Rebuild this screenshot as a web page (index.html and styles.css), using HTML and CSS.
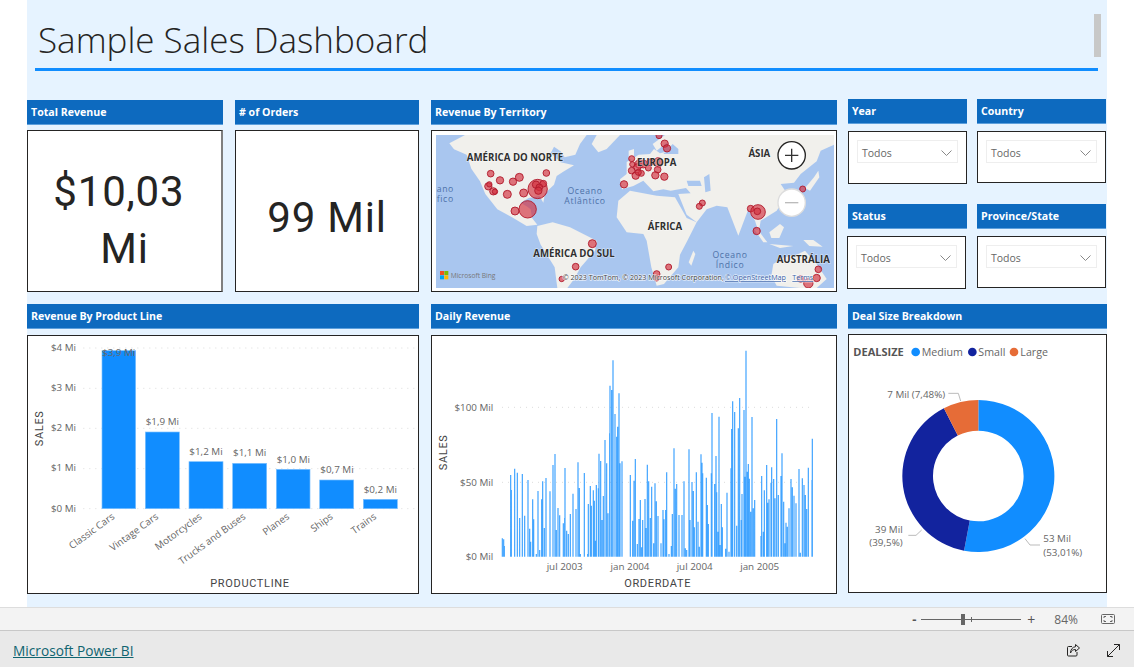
FILE: index.html
```html
<!DOCTYPE html>
<html lang="pt">
<head>
<meta charset="utf-8">
<title>Sample Sales Dashboard</title>
<link rel="stylesheet" href="styles.css">
</head>
<body>
<div class="app">
  <div class="stage">
    <main class="canvas">
      <header class="title-block">
        <h1 class="title">Sample Sales Dashboard</h1>
        <div class="title-scroll"></div>
      </header>
      <div class="dash">
        <section class="visual">
          <h2 class="vh">Total Revenue</h2>
          <div class="box kpi kpi-two kpi-right-shadow"><span class="kpi-value">$10,03&nbsp;<br>Mi</span></div>
        </section>
        <section class="visual">
          <h2 class="vh"># of Orders</h2>
          <div class="box kpi"><span class="kpi-value">99 Mil</span></div>
        </section>
        <section class="visual">
          <h2 class="vh">Revenue By Territory</h2>
          <div class="box map-box">
            <svg class="map" viewBox="18 123 1194 459" width="398" height="153" role="img" aria-label="Mapa">
              <defs><filter id="soft" x="-5%" y="-5%" width="110%" height="110%"><feGaussianBlur stdDeviation="1.6"/></filter></defs>
              <rect x="18" y="123" width="1194" height="459" fill="#a9c6ef"/>
              <g fill="#f1f0ec" filter="url(#soft)">
                <path d="M58 148 105 123H470L450 150 436 182 404 190 392 172 372 158 362 178 392 205 432 214 402 232 380 246 372 272 345 298 340 326 328 306 296 312 272 326 292 338 302 346 306 372 322 392 290 396 246 370 202 346 166 300 150 262 124 224 110 182 72 166Z"/>
                <path d="M500 123H570L530 165 505 175 485 150Z"/>
                <path d="M322 396 368 385 420 400 500 440 495 470 452 520 432 556 412 582H382L374 520 332 452 320 420Z"/>
                <path d="M705 123H1212V152L1172 170 1160 202 1112 240 1092 266 1052 270 1072 300 1040 350 992 380 986 415 975 380 955 346 925 425 892 340 860 335 830 346 800 385 770 362 745 300 782 298 768 282 722 290 700 286 670 292 640 260 610 276 576 286 570 256 590 240 590 204 626 182 660 180 672 165 690 178 720 170 712 145 680 170 668 150Z"/>
                <path d="M565 320 600 290 680 305 735 310 770 372 800 385 772 440 750 482 745 520 702 570 680 575 664 520 650 440 640 420 590 415 560 370Z"/>
                <path d="M1030 510 1062 490 1100 482 1125 470 1160 510 1190 555 1160 582H1110L1040 575 1024 545Z"/>
                <path d="M776 505 790 470 796 480 784 515Z"/>
                <path d="M972 405 984 408 1012 445 1000 445ZM1018 415 1050 390 1062 400 1048 432 1024 432ZM1120 438 1150 438 1178 458 1138 456ZM1018 450 1090 456 1050 462ZM1125 282 1152 250 1165 230 1168 250 1140 290ZM596 170 612 165 612 195 596 195Z"/>
              </g>
              <g fill="#a9c6ef" filter="url(#soft)">
                <path d="M700 180 728 150 745 165 745 180ZM822 250 838 240 842 290 826 295ZM770 260H810L815 276H775Z"/>
              </g>
              <g class="map-ocean">
                <text x="465" y="300" text-anchor="middle">Oceano</text>
                <text x="465" y="330" text-anchor="middle">Atlântico</text>
                <text x="900" y="492" text-anchor="middle">Oceano</text>
                <text x="900" y="522" text-anchor="middle">Índico</text>
                <text x="20" y="295">ano</text>
                <text x="20" y="325">fico</text>
              </g>
              <g class="map-bubbles">
                <circle cx="323" cy="285" r="29"/><circle cx="293" cy="346" r="26"/><circle cx="182" cy="239" r="10"/><circle cx="210" cy="259" r="11"/><circle cx="249" cy="263" r="11"/><circle cx="268" cy="250" r="12"/><circle cx="349" cy="237" r="10"/><circle cx="175" cy="277" r="11"/><circle cx="178" cy="271" r="8"/><circle cx="190" cy="292" r="11"/><circle cx="195" cy="293" r="8"/><circle cx="232" cy="301" r="12"/><circle cx="281" cy="297" r="12"/><circle cx="318" cy="272" r="11"/><circle cx="340" cy="269" r="10"/><circle cx="328" cy="280" r="10"/><circle cx="325" cy="290" r="11"/><circle cx="255" cy="351" r="12"/><circle cx="487" cy="449" r="12"/><circle cx="437" cy="518" r="10"/><circle cx="395" cy="555" r="8"/><circle cx="582" cy="271" r="11"/>
                <circle cx="605" cy="194" r="9"/><circle cx="607" cy="211" r="8"/><circle cx="628" cy="210" r="13"/><circle cx="640" cy="210" r="12"/><circle cx="622" cy="220" r="11"/><circle cx="655" cy="222" r="9"/><circle cx="685" cy="205" r="14"/><circle cx="660" cy="205" r="10"/><circle cx="605" cy="230" r="10"/><circle cx="617" cy="245" r="11"/><circle cx="634" cy="238" r="9"/><circle cx="683" cy="227" r="10"/><circle cx="676" cy="244" r="11"/><circle cx="703" cy="248" r="11"/><circle cx="687" cy="125" r="9"/><circle cx="704" cy="149" r="11"/><circle cx="711" cy="163" r="11"/><circle cx="625" cy="235" r="9"/>
                <circle cx="1118" cy="285" r="9"/><circle cx="817" cy="327" r="9"/><circle cx="808" cy="337" r="9"/><circle cx="962" cy="344" r="10"/><circle cx="984" cy="354" r="22"/><circle cx="982" cy="352" r="10"/><circle cx="980" cy="411" r="11"/><circle cx="716" cy="519" r="9"/><circle cx="680" cy="540" r="10"/><circle cx="680" cy="553" r="8"/><circle cx="1165" cy="526" r="10"/><circle cx="1160" cy="552" r="11"/><circle cx="1135" cy="568" r="14"/><circle cx="1112" cy="555" r="10"/>
              </g>
              <g class="map-label">
                <text x="255" y="200" text-anchor="middle">AMÉRICA DO NORTE</text>
                <text x="680" y="215" text-anchor="middle">EUROPA</text>
                <text x="988" y="190" text-anchor="middle">ÁSIA</text>
                <text x="705" y="407" text-anchor="middle">ÁFRICA</text>
                <text x="432" y="489" text-anchor="middle">AMÉRICA DO SUL</text>
                <text x="1120" y="508" text-anchor="middle">AUSTRÁLIA</text>
              </g>
              <circle class="zoom-on" cx="1085" cy="184" r="41"/>
              <path class="zoom-on-glyph" d="M1085 164V204M1065 184H1105"/>
              <circle class="zoom-off" cx="1085" cy="326" r="41"/>
              <path class="zoom-off-glyph" d="M1065 326H1105"/>
              <rect x="30" y="531" width="12" height="12" fill="#f25022"/><rect x="43" y="531" width="12" height="12" fill="#7fba00"/><rect x="30" y="544" width="12" height="12" fill="#00a4ef"/><rect x="43" y="544" width="12" height="12" fill="#ffb900"/>
              <text class="bing" x="62" y="551">Microsoft Bing</text>
              <text class="attr" x="398" y="558">© 2023 TomTom, © 2023 Microsoft Corporation,</text>
              <text class="attr attr-link" x="885" y="558">© OpenStreetMap</text>
              <text class="attr attr-link" x="1087" y="558">Terms</text>
            </svg>
          </div>
        </section>
        <div class="slicers">
          <section class="visual slicer">
            <h2 class="vh">Year</h2>
            <div class="box slicer-box"><div class="select"><span>Todos</span><svg class="chev" viewBox="0 0 11 6" width="11" height="6"><path d="M.5.5 5.5 5.5 10.500.5"/></svg></div></div>
          </section>
          <section class="visual slicer">
            <h2 class="vh">Country</h2>
            <div class="box slicer-box slicer-short"><div class="select"><span>Todos</span><svg class="chev" viewBox="0 0 11 6" width="11" height="6"><path d="M.5.5 5.5 5.5 10.500.5"/></svg></div></div>
          </section>
          <section class="visual slicer">
            <h2 class="vh">Status</h2>
            <div class="box slicer-box slicer-nudged"><div class="select"><span>Todos</span><svg class="chev" viewBox="0 0 11 6" width="11" height="6"><path d="M.5.5 5.5 5.5 10.500.5"/></svg></div></div>
          </section>
          <section class="visual slicer">
            <h2 class="vh">Province/State</h2>
            <div class="box slicer-box slicer-short"><div class="select"><span>Todos</span><svg class="chev" viewBox="0 0 11 6" width="11" height="6"><path d="M.5.5 5.5 5.5 10.500.5"/></svg></div></div>
          </section>
        </div>

        <section class="visual product">
          <h2 class="vh">Revenue By Product Line</h2>
          <div class="box chart-box">
            <svg class="chart" viewBox="24 108 1170 771" width="390" height="257" role="img" aria-label="Revenue by product line">
              <g class="grid-dots">
                <path d="M190 144H1185M190 265H1185M190 385H1185M190 506H1185M190 626H1185"/>
              </g>
              <g class="axis" text-anchor="end">
                <text x="168" y="152">$4 Mi</text><text x="168" y="274">$3 Mi</text><text x="168" y="394">$2 Mi</text><text x="168" y="514">$1 Mi</text><text x="168" y="635">$0 Mi</text>
              </g>
              <g class="bars">
                <rect x="246" y="152" width="101" height="474"/><rect x="376" y="396" width="102" height="230"/><rect x="507" y="485" width="102" height="141"/><rect x="638" y="490" width="102" height="136"/><rect x="769" y="508" width="101" height="118"/><rect x="899" y="540" width="102" height="86"/><rect x="1030" y="598" width="102" height="28"/>
              </g>
              <g class="axis" text-anchor="middle">
                <text x="296" y="167">$3,9 Mi</text><text x="427" y="374">$1,9 Mi</text><text x="558" y="464">$1,2 Mi</text><text x="689" y="467">$1,1 Mi</text><text x="820" y="488">$1,0 Mi</text><text x="951" y="518">$0,7 Mi</text><text x="1081" y="578">$0,2 Mi</text>
              </g>
              <g class="axis" text-anchor="end">
                <text transform="translate(286 654) rotate(-36)">Classic Cars</text>
                <text transform="translate(417 654) rotate(-36)">Vintage Cars</text>
                <text transform="translate(548 654) rotate(-36)">Motorcycles</text>
                <text transform="translate(679 654) rotate(-36)">Trucks and Buses</text>
                <text transform="translate(810 654) rotate(-36)">Planes</text>
                <text transform="translate(941 654) rotate(-36)">Ships</text>
                <text transform="translate(1071 654) rotate(-36)">Trains</text>
              </g>
              <text class="axis-title" transform="translate(70 385) rotate(-90)" text-anchor="middle">SALES</text>
              <text class="axis-title" x="690" y="862" text-anchor="middle">PRODUCTLINE</text>
            </svg>
          </div>
        </section>
        <section class="visual daily">
          <h2 class="vh">Daily Revenue</h2>
          <div class="box chart-box">
            <svg class="chart" viewBox="6 18 1212 771" width="404" height="257" role="img" aria-label="Daily revenue">
              <path class="grid-line" d="M216 232H1150M216 457H1150"/>
              <path class="spikes" d="M217 680V625M221 680V628M223 680V648M242 680V435M244 680V480M254 680V416M262 680V428M269 680V564M277 680V432M284 680V557M294 680V450M299 680V596M302 680V635M308 680V508M311 680V568M319 680V672M324 680V483M329 680V660M335 680V508M338 680V454M343 680V594M348 680V444M360 680V484M360 680V606M369 680V405M375 680V372M379 680V600M384 680V534M389 680V556M400 680V580M405 680V414M404 680V564M410 680V602M415 680V612M421 680V552M429 680V491M438 680V537M444 680V397M448 680V474M451 680V672M463 680V429M473 680V672M475 680V522M481 680V468M484 680V527M490 680V481M493 680V512M496 680V632M499 680V465M505 680V475M507 680V371M512 680V393M516 680V570M520 680V498M525 680V330M530 680V400M534 680V550M539 680V310M540 680V167M545 680V180M549 680V91M555 680V252M560 680V320M563 680V290M567 680V190M570 680V400M576 680V394M601 680V435M608 680V572M612 680V452M616 680V387M622 680V642M627 680V567M631 680V510M635 680V652M638 680V570M645 680V507M648 680V594M652 680V404M656 680V454M661 680V564M665 680V470M671 680V640M675 680V460M679 680V514M684 680V558M693 680V640M699 680V540M702 680V568M707 680V540M710 680V427M717 680V672M724 680V648M727 680V552M732 680V355M736 680V476M740 680V462M747 680V555M756 680V555M762 680V454M766 680V655M770 680V660M777 680V358M780 680V570M786 680V456M790 680V483M793 680V592M799 680V427M804 680V575M808 680V650M813 680V373M816 680V398M818 680V430M829 680V443M832 680V525M835 680V582M846 680V249M844 680V430M854 680V462M858 680V378M860 680V487M864 680V605M867 680V260M870 680V645M874 680V522M877 680V592M887 680V656M891 680V488M897 680V665M903 680V415M905 680V297M908 680V214M914 680V246M920 680V587M925 680V295M929 680V204M934 680V570M936 680V492M942 680V240M945 680V440M948 680V62M952 680V425M955 680V402M958 680V446M962 680V545M966 680V261M970 680V535M974 680V510M993 680V618M995 680V438M1000 680V605M1003 680V481M1010 680V405M1013 680V518M1017 680V508M1023 680V458M1025 680V412M1031 680V447M1035 680V505M1040 680V267M1045 680V495M1053 680V438M1056 680V370M1061 680V515M1065 680V640M1068 680V578M1072 680V590M1077 680V535M1083 680V447M1087 680V472M1092 680V497M1098 680V520M1107 680V417M1111 680V668M1117 680V445M1122 680V465M1126 680V495M1130 680V537M1135 680V413M1147 680V326M1146 680V450"/>
              <g class="axis" text-anchor="end">
                <text x="190" y="243">$100 Mil</text><text x="190" y="468">$50 Mil</text><text x="190" y="690">$0 Mil</text>
              </g>
              <g class="axis" text-anchor="middle">
                <text x="404" y="719">jul 2003</text><text x="600" y="719">jan 2004</text><text x="794" y="719">jul 2004</text><text x="989" y="719">jan 2005</text>
              </g>
              <text class="axis-title" transform="translate(51 367) rotate(-90)" text-anchor="middle">SALES</text>
              <text class="axis-title" x="683" y="770" text-anchor="middle">ORDERDATE</text>
            </svg>
          </div>
        </section>
        <section class="visual deal">
          <h2 class="vh">Deal Size Breakdown</h2>
          <div class="box chart-box deal-box">
            <svg class="chart" viewBox="27 105 771 771" width="257" height="257" role="img" aria-label="Deal size breakdown">
              <text class="legend-title" x="40" y="167">DEALSIZE</text>
              <circle cx="227" cy="156" r="13" fill="#118dff"/><text class="legend" x="245" y="167">Medium</text>
              <circle cx="397" cy="156" r="13" fill="#12239e"/><text class="legend" x="415" y="167">Small</text>
              <circle cx="522" cy="156" r="13" fill="#e66c37"/><text class="legend" x="541" y="167">Large</text>
              <path fill="#118dff" d="M415 300A228 228 0 1 1 372.100 751.900L389.400 661.600A136 136 0 1 0 415 392Z"/>
              <path fill="#12239e" d="M372.100 751.900A228 228 0 0 1 311.700 324.700L353.400 406.800A136 136 0 0 0 389.400 661.600Z"/>
              <path fill="#e66c37" d="M311.700 324.700A228 228 0 0 1 415 300V392A136 136 0 0 0 353.400 406.800Z"/>
              <path class="leader" d="M325 280H355L362 303M245 690 228 706H205M555 716 570 735H600"/>
              <g class="axis">
                <text x="142" y="293">7 Mil (7,48%)</text>
                <text x="188" y="698" text-anchor="end">39 Mil</text>
                <text x="188" y="738" text-anchor="end">(39,5%)</text>
                <text x="610" y="725">53 Mil</text>
                <text x="610" y="768">(53,01%)</text>
              </g>
            </svg>
          </div>
        </section>
      </div>
    </main>
  </div>
  <div class="zoombar">
    <span class="zb-minus">-</span>
    <div class="zb-slider"><span class="zb-tick"></span><span class="zb-thumb"></span></div>
    <span class="zb-plus">+</span>
    <span class="zb-pct">84%</span>
    <svg class="zb-fit" viewBox="0 0 14 10" width="14" height="10"><rect x=".5" y=".5" width="13" height="9" rx="1"/><path d="M3 4V2.500H5M9 2.500H11V4M11 6V7.500H9M5 7.500H3V6"/></svg>
  </div>
  <footer class="footer">
    <a class="pbi-link" href="#">Microsoft Power BI</a>
    <div class="footer-icons">
      <svg viewBox="0 0 13 13" width="13" height="13"><path d="M5 2.500H1.500A1 1 0 0 0 .500 3.500V11A1 1 0 0 0 1.500 12H9A1 1 0 0 0 10 11V8"/><path d="M8.500.500 12.500 4 8.500 7.500V5.500C6 5.500 4.500 6.500 3.500 9 3.500 5.500 5.500 3 8.500 2.700Z"/></svg>
      <svg viewBox="0 0 13 13" width="13" height="13"><path d="M.500 12.500 12.500.500M7 .500H12.500V6M.500 7V12.500H6"/></svg>
    </div>
  </footer>
</div>
</body>
</html>
```

FILE: styles.css
```css
* { box-sizing: border-box; }
html, body { margin: 0; padding: 0; }
body {
  width: 1134px;
  height: 667px;
  overflow: hidden;
  background: #fff;
  font-family: "Open Sans", "Noto Sans", sans-serif;
}
.app { display: flex; flex-direction: column; width: 1134px; height: 667px; }
.stage { height: 607px; padding-left: 27px; flex: none; }
.canvas { width: 1080px; height: 607px; background: #e6f3ff; overflow: hidden; }

.title-block { position: relative; height: 99px; padding: 0 9px 0 8px; }
.title {
  margin: 0;
  height: 71px;
  padding: 16px 0 0 3px;
  border-bottom: 3px solid #118dff;
  font-weight: 350;
  font-size: 35px;
  line-height: 48px;
  color: #252423;
  white-space: nowrap;
}
.title-scroll { position: absolute; top: 14px; left: 1067px; width: 7px; height: 43px; background: #c8c8c8; }

.dash {
  display: grid;
  grid-template-columns: 196px 184px 406px 259px;
  grid-template-rows: 193px 290px;
  column-gap: 12px;
  row-gap: 12px;
}
.visual { display: flex; flex-direction: column; padding-top: 1px; min-width: 0; }
.visual .box { flex: 1; }
.product { grid-column: 1 / span 2; padding-top: 0; }
.daily { grid-column: 3; padding-top: 0; }
.deal { grid-column: 4; padding-top: 0; margin-left: -1px; width: 259px; }
.vh {
  margin: 0;
  height: 25px;
  flex: none;
  padding: 1px 0 0 4px;
  background: #0d6abf;
  border-bottom: 1px solid #5c9fdc;
  color: #fff;
  font-size: 10.600px;
  font-weight: 700;
  line-height: 23px;
  white-space: nowrap;
}
.box {
  margin-top: 5px;
  background: #fff;
  border: 1px solid #252423;
}
.kpi { display: flex; align-items: center; justify-content: center; text-align: center; padding-top: 12px; }
.kpi-two { padding-top: 18px; }
.kpi-right-shadow { border-right: 2px solid #7f7f7f; }
.kpi-value {
  font-family: Roboto, "Liberation Sans", sans-serif;
  font-size: 42px;
  line-height: 57px;
  color: #252423;
  letter-spacing: .8px;
}
.map-box { padding: 4px; height: 162px; flex: none !important; }
.map { display: block; }
.map-ocean text { font: 26px "Open Sans", sans-serif; fill: #4d71a8; letter-spacing: 2px; }
.map-label text { font: 700 29px "Open Sans", sans-serif; fill: #2f2f2f; stroke: #fff; stroke-width: 3px; paint-order: stroke; stroke-opacity: .6; }
.map-bubbles circle { fill: #d22e3e; fill-opacity: .65; stroke: #b01a2b; stroke-width: 3px; stroke-opacity: .9; }
.zoom-on { fill: #fff; stroke: #252423; stroke-width: 4px; }
.zoom-on-glyph { fill: none; stroke: #333; stroke-width: 4px; }
.zoom-off { fill: #fff; stroke: #ddd; stroke-width: 4px; }
.zoom-off-glyph { fill: none; stroke: #bbb; stroke-width: 4px; }
.bing { font: 20px "Open Sans", sans-serif; fill: #777; }
.attr { font: 21.500px "Open Sans", sans-serif; fill: #444; stroke: #fff; stroke-width: 4px; paint-order: stroke; stroke-opacity: .7; }
.attr-link { fill: #3a63a8; text-decoration: underline; }

.slicers {
  display: grid;
  grid-template-columns: 119px 129px;
  grid-template-rows: 85px 85px;
  column-gap: 10px;
  row-gap: 20px;
  margin-left: -1px;
  width: 260px;
}
.slicer { padding-top: 0; }
.slicer-box {
  flex: none !important;
  margin-top: 7px;
  height: 53px;
  padding: 8px 8px;
}
.slicer-short { height: 52px; }
.slicer-nudged { margin-left: -1px; margin-right: 1px; }
.select {
  display: flex;
  align-items: center;
  justify-content: space-between;
  height: 23px;
  padding: 2px 5px 0 4px;
  border: 1px solid #eeeeee;
  font-size: 10.500px;
  color: #666;
}
.chev { fill: none; stroke: #888; stroke-width: 1; }
.chart-box { flex: none !important; margin-top: 6px; height: 259px; }
.deal-box { margin-top: 5px; }
.chart { display: block; }
.grid-dots path { fill: none; stroke: #dcdcdc; stroke-width: 3px; stroke-dasharray: 3 15; }
.grid-line { fill: none; stroke: #dcdcdc; stroke-width: 3px; stroke-dasharray: 3 15; }
.axis text { font: 29.500px "Open Sans", sans-serif; fill: #666; }
.bars rect { fill: #118dff; stroke: #7cc0ff; stroke-width: 2px; }
.axis-title { font: 33px Roboto, sans-serif; fill: #444; letter-spacing: 2px; }
.spikes { fill: none; stroke: #118dff; stroke-width: 3.600px; stroke-opacity: .8; }
.legend-title { font: 700 33px "Open Sans", sans-serif; fill: #555; }
.legend { font: 32px "Open Sans", sans-serif; fill: #666; }
.leader { fill: none; stroke: #bbb; stroke-width: 3px; }

.zoombar {
  position: relative;
  flex: none;
  height: 24px;
  display: flex;
  align-items: center;
  justify-content: flex-end;
  padding-right: 19px;
  background: #f3f3f3;
  border-top: 1px solid #dddddd;
  border-bottom: 1px solid #c8c8c8;
}
.zb-minus { font: 700 13px "Open Sans", sans-serif; color: #555; margin-right: 5px; }
.zb-slider { position: relative; width: 100px; height: 1px; background: #666; }
.zb-thumb { position: absolute; left: 40px; top: -5px; width: 4px; height: 11px; background: #666; }
.zb-tick { position: absolute; left: 50px; top: -2px; width: 1px; height: 5px; background: #666; }
.zb-plus { font: 14px "Open Sans", sans-serif; color: #555; margin-left: 6px; }
.zb-pct { font: 12px "Open Sans", sans-serif; color: #666; margin-left: 19px; margin-right: 23px; }
.zb-fit { fill: none; stroke: #666; stroke-width: 1; }
.footer {
  flex: 1;
  display: flex;
  align-items: center;
  justify-content: space-between;
  padding: 2px 14px 0 13px;
  background: #e9e9e9;
}
.pbi-link { font-size: 13.700px; color: #0f6470; text-decoration: underline; }
.footer-icons { display: flex; gap: 27px; }
.footer-icons svg { display: block; fill: none; stroke: #252423; stroke-width: 1; }
```
